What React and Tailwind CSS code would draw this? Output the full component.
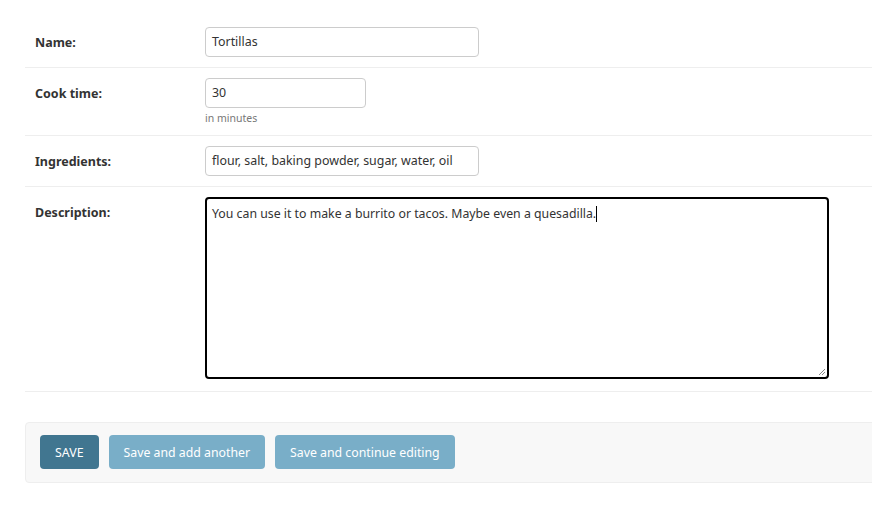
export default function App() {
  const font = { fontFamily: '"Noto Sans", "Open Sans", sans-serif' };
  const Row = ({ label, children, last }) => (
    <div className={`flex border-b border-[#eeeeee] pt-[10px] ${last ? "pb-[12px]" : "pb-[10px]"}`}>
      <div className="w-[180px] shrink-0 pl-[10px] pt-[8px] text-[12.5px] leading-[16px] font-bold text-[#333333]">
        {label}
      </div>
      <div className="flex flex-col">{children}</div>
    </div>
  );
  const Input = ({ value, w }) => (
    <div
      className={`${w} h-[30px] border border-[#cccccc] rounded-[4px] px-[6px] pt-[1px] flex items-center text-[12.4px] text-[#333333]`}
    >
      {value}
    </div>
  );
  return (
    <div className="w-full min-h-[511px] bg-white overflow-hidden" style={font}>
      <div className="w-[900px] pl-[25px] pt-[17px]">
        <Row label="Name:">
          <Input value="Tortillas" w="w-[274px]" />
        </Row>
        <Row label="Cook time:">
          <Input value="30" w="w-[161px]" />
          <div className="mt-[4px] text-[10.5px] leading-[13px] text-[#777777]">in minutes</div>
        </Row>
        <Row label="Ingredients:">
          <Input value="flour, salt, baking powder, sugar, water, oil" w="w-[274px]" />
        </Row>
        <Row label="Description:" last>
          <div className="relative w-[624px] h-[182px] border-2 border-black rounded-[4px] px-[5px] pt-[6px] text-[12.3px] leading-[18px] text-[#333333]">
            <span>You can use it to make a burrito or tacos. Maybe even a quesadilla.</span>
            <span className="inline-block w-[1px] h-[16px] bg-black align-middle -mt-[2px]"></span>
            <svg className="absolute right-[1px] bottom-[1px]" width="8" height="8" viewBox="0 0 8 8">
              <path d="M7 1 L1 7 M7 4 L4 7" stroke="#888" strokeWidth="1" />
            </svg>
          </div>
        </Row>
        <div className="mt-[30px] border border-[#eeeeee] bg-[#f8f8f8] rounded-l-[4px] px-[14px] pt-[12px] pb-[13px] flex gap-[10px]">
          <div className="h-[34px] px-[15px] pt-[2px] flex items-center rounded-[4px] bg-[#417690] text-white text-[12.4px]">
            SAVE
          </div>
          <div className="h-[34px] px-[15px] pt-[2px] flex items-center rounded-[4px] bg-[#79aec8] text-white text-[12.3px]">
            Save and add another
          </div>
          <div className="h-[34px] px-[15px] pt-[2px] flex items-center rounded-[4px] bg-[#79aec8] text-white text-[12.3px]">
            Save and continue editing
          </div>
        </div>
      </div>
    </div>
  );
}
